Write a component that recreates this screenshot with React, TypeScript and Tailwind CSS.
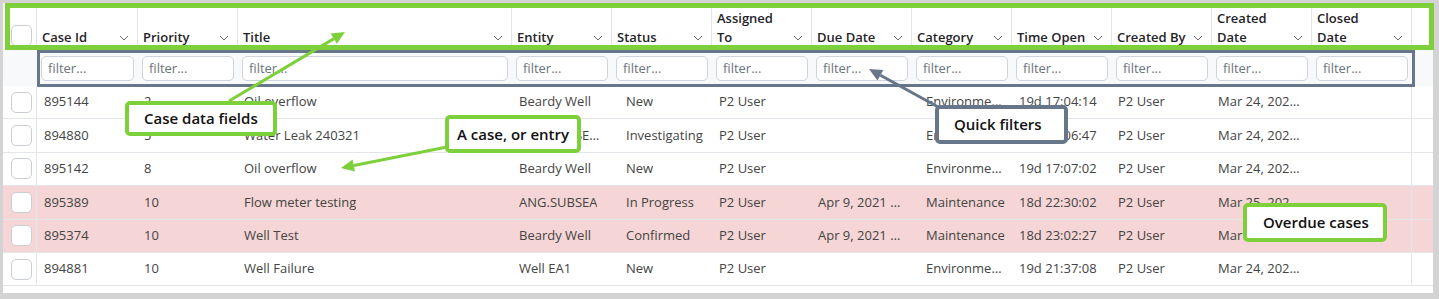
import React from "react";

type CaseRow = {
  id: string;
  priority: string;
  title: string;
  entity: string;
  status: string;
  assigned: string;
  due: string;
  category: string;
  timeOpen: string;
  createdBy: string;
  created: string;
  closed: string;
  overdue?: boolean;
};

const headers: { label: string[]; pl?: string }[] = [
  { label: ["Case Id"] },
  { label: ["Priority"] },
  { label: ["Title"] },
  { label: ["Entity"] },
  { label: ["Status"] },
  { label: ["Assigned", "To"] },
  { label: ["Due Date"] },
  { label: ["Category"] },
  { label: ["Time Open"] },
  { label: ["Created By"] },
  { label: ["Created", "Date"] },
  { label: ["Closed", "Date"] },
];

const rows: CaseRow[] = [
  { id: "895144", priority: "2", title: "Oil overflow", entity: "Beardy Well", status: "New", assigned: "P2 User", due: "", category: "Environmental", timeOpen: "19d 17:04:14", createdBy: "P2 User", created: "Mar 24, 2021 5:04 PM", closed: "" },
  { id: "894880", priority: "5", title: "Water Leak 240321", entity: "ANG.SUBSEA PSI", status: "Investigating", assigned: "P2 User", due: "", category: "Environmental", timeOpen: "19d 17:06:47", createdBy: "P2 User", created: "Mar 24, 2021 5:06 PM", closed: "" },
  { id: "895142", priority: "8", title: "Oil overflow", entity: "Beardy Well", status: "New", assigned: "P2 User", due: "", category: "Environmental", timeOpen: "19d 17:07:02", createdBy: "P2 User", created: "Mar 24, 2021 5:07 PM", closed: "" },
  { id: "895389", priority: "10", title: "Flow meter testing", entity: "ANG.SUBSEA", status: "In Progress", assigned: "P2 User", due: "Apr 9, 2021 10:00 AM", category: "Maintenance", timeOpen: "18d 22:30:02", createdBy: "P2 User", created: "Mar 25, 2021 9:41 AM", closed: "", overdue: true },
  { id: "895374", priority: "10", title: "Well Test", entity: "Beardy Well", status: "Confirmed", assigned: "P2 User", due: "Apr 9, 2021 10:00 AM", category: "Maintenance", timeOpen: "18d 23:02:27", createdBy: "P2 User", created: "Mar 25, 2021 9:09 AM", closed: "", overdue: true },
  { id: "894881", priority: "10", title: "Well Failure", entity: "Well EA1", status: "New", assigned: "P2 User", due: "", category: "Environmental", timeOpen: "19d 21:37:08", createdBy: "P2 User", created: "Mar 24, 2021 12:34 PM", closed: "" },
];

const grid =
  "grid grid-cols-[34px_101px_100px_274px_100px_100px_100px_100px_100px_100px_100px_100px_100px_1fr]";

function Checkbox() {
  return <div className="h-[21px] w-[21px] rounded-[5px] border border-[#c9ced5] bg-white" />;
}

function Chevron() {
  return (
    <svg width="10" height="6" viewBox="0 0 10 6" className="shrink-0">
      <path d="M1 1l4 4 4-4" fill="none" stroke="#6b6b6b" strokeWidth="1" />
    </svg>
  );
}

function Cell({ children, pad = "pl-[7px]", last }: { children?: React.ReactNode; pad?: string; last?: boolean }) {
  return (
    <div className={`flex min-w-0 items-center pr-[6px] ${pad} ${last ? "border-r border-[#e2e6eb]" : ""}`}>
      <span className="truncate">{children}</span>
    </div>
  );
}

function Callout({ text, className, color = "border-[#7ed03b]" }: { text: string; className: string; color?: string }) {
  return (
    <div
      className={`absolute flex items-center rounded-[5px] border-4 bg-white text-[15px] font-semibold text-[#111] ${color} ${className}`}
    >
      {text}
    </div>
  );
}

export default function App() {
  return (
    <div className="relative h-[299px] w-[1439px] bg-[#d3d3d3] pb-[6px] pl-[3px] pr-[6px] pt-[3px] font-['Open_Sans',sans-serif]">
      <div className="h-full overflow-hidden bg-white">
        {/* header */}
        <div className={`${grid} h-[47px]`}>
          <div className="flex items-end border-r border-[#e2e6eb] pb-[4px] pl-[8px]">
            <Checkbox />
          </div>
          {headers.map((h) => (
            <div
              key={h.label.join(" ")}
              className="flex items-end justify-between border-r border-[#e2e6eb] pb-[3px] pl-[5px] pr-[8px]"
            >
              <div className="text-[13px] font-semibold leading-[19px] text-[#1f2328]">
                {h.label.map((l) => (
                  <div key={l}>{l}</div>
                ))}
              </div>
              <div className="flex h-[19px] items-center">
                <Chevron />
              </div>
            </div>
          ))}
          <div />
        </div>

        {/* quick filters */}
        <div className={`${grid} h-[36px] bg-[#f8f9fa]`}>
          <div />
          {headers.map((h) => (
            <div key={h.label.join(" ")} className="flex items-center px-[4px]">
              <input
                placeholder="filter..."
                className="h-[25px] w-full rounded-[5px] border border-[#ced4da] bg-white pl-[6px] text-[13px] text-[#333] placeholder:text-[#6c757d]"
              />
            </div>
          ))}
          <div />
        </div>

        {/* rows */}
        {rows.map((r) => (
          <div
            key={r.id}
            className={`${grid} h-[33.4px] border-b border-[#e2e6eb] text-[13px] text-[#444] ${r.overdue ? "bg-[#f5d5d5]" : "bg-white"}`}
          >
            <div className="flex items-center border-r border-[#e2e6eb] pl-[8px]">
              <Checkbox />
            </div>
            <Cell>{r.id}</Cell>
            <Cell pad="pl-[6px]">{r.priority}</Cell>
            <Cell pad="pl-[6px]">{r.title}</Cell>
            <Cell>{r.entity}</Cell>
            <Cell pad="pl-[14px]">{r.status}</Cell>
            <Cell>{r.assigned}</Cell>
            <Cell pad="pl-[6px]">{r.due}</Cell>
            <Cell pad="pl-[14px]">{r.category}</Cell>
            <Cell>{r.timeOpen}</Cell>
            <Cell pad="pl-[6px]">{r.createdBy}</Cell>
            <Cell pad="pl-[6px]">{r.created}</Cell>
            <Cell last>{r.closed}</Cell>
            <div />
          </div>
        ))}
      </div>

      {/* annotation outlines */}
      <div className="pointer-events-none absolute left-[5px] top-[3px] h-[47px] w-[1429px] border-[5px] border-[#7ed03b]" />
      <div className="pointer-events-none absolute left-[37px] top-[50px] h-[37px] w-[1378px] border-[3px] border-[#67768b]" />

      <svg className="pointer-events-none absolute left-0 top-0" width="1439" height="299">
        <line x1="229" y1="101" x2="334" y2="38.6" stroke="#7ed03b" strokeWidth="3" />
        <polygon points="345,32 336.9,43.8 330.7,33.4" fill="#7ed03b" />
        <line x1="447" y1="147" x2="353.8" y2="165.5" stroke="#7ed03b" strokeWidth="3" />
        <polygon points="341,168 355,171.4 352.6,159.6" fill="#7ed03b" />
        <line x1="940" y1="108" x2="880.4" y2="75.3" stroke="#67768b" strokeWidth="3" />
        <polygon points="869,69 883.3,70 877.5,80.6" fill="#67768b" />
      </svg>

      <Callout text="Case data fields" className="left-[125px] top-[101px] h-[35px] w-[152px] pl-[15px]" />
      <Callout text="A case, or entry" className="left-[445px] top-[115px] h-[38px] w-[136px] pl-[8px]" />
      <Callout
        text="Quick filters"
        color="border-[#67768b]"
        className="left-[935px] top-[105px] h-[39px] w-[133px] pl-[15px]"
      />
      <Callout text="Overdue cases" className="left-[1243px] top-[203px] h-[39px] w-[144px] pl-[16px]" />
    </div>
  );
}
